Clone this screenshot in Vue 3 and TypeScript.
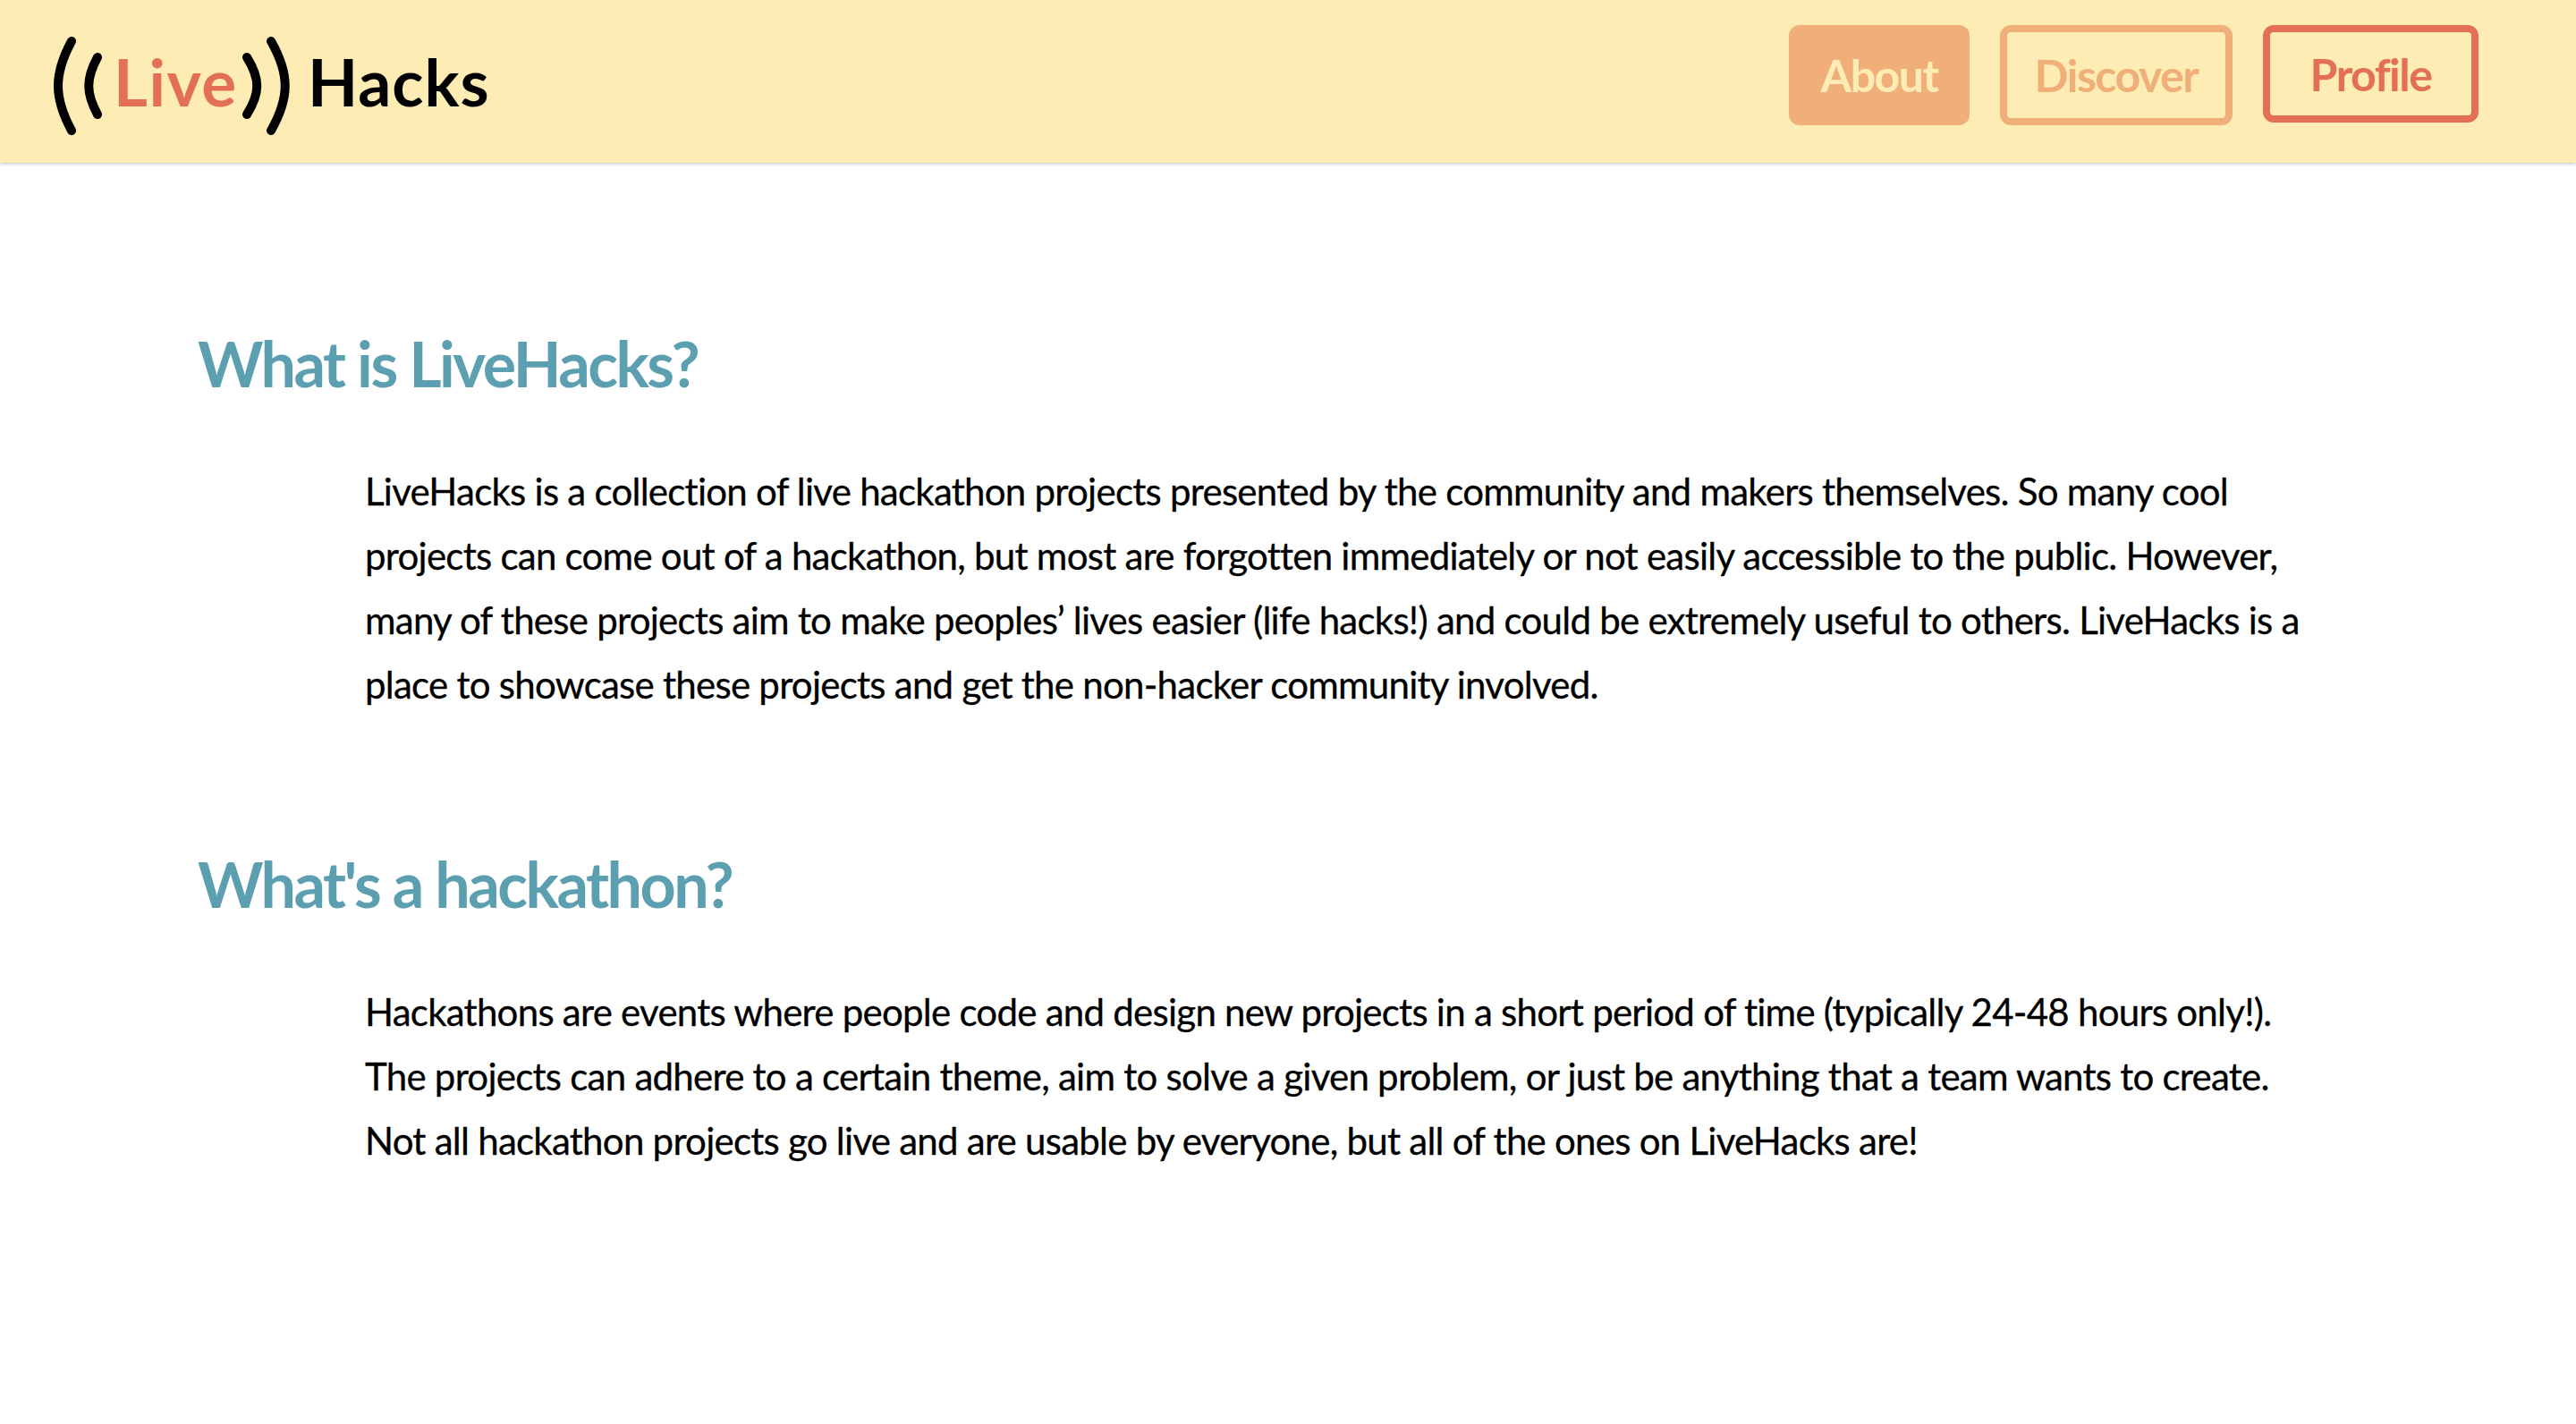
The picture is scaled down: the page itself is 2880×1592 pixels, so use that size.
<template>
  <div class="page">
    <header class="header">
      <a class="logo" href="#">
        <svg class="waves" width="56" height="110" viewBox="0 0 56 110">
          <path d="M22 5C2 42 2 68 22 105M51 23C38 47 38 63 51 87" />
        </svg>
        <span class="logo-live">Live</span>
        <svg class="waves" width="54" height="110" viewBox="0 0 54 110">
          <path d="M32 5C53 42 53 68 32 105M5 23C20 47 20 63 5 87" />
        </svg>
        <span class="logo-hacks">Hacks</span>
      </a>
      <nav class="nav">
        <button class="btn btn-about">About</button>
        <button class="btn btn-discover">Discover</button>
        <button class="btn btn-profile">Profile</button>
      </nav>
    </header>

    <main class="content">
      <section v-for="item in sections" :key="item.title" class="block">
        <h2 class="title">{{ item.title }}</h2>
        <p class="text">
          <span v-for="line in item.lines" :key="line" class="line">{{ line }}</span>
        </p>
      </section>
    </main>
  </div>
</template>

<script setup lang="ts">
interface Section {
  title: string
  lines: string[]
}

const sections: Section[] = [
  {
    title: 'What is LiveHacks?',
    lines: [
      'LiveHacks is a collection of live hackathon projects presented by the community and makers themselves. So many cool',
      'projects can come out of a hackathon, but most are forgotten immediately or not easily accessible to the public. However,',
      'many of these projects aim to make peoples’ lives easier (life hacks!) and could be extremely useful to others. LiveHacks is a',
      'place to showcase these projects and get the non-hacker community involved.'
    ]
  },
  {
    title: "What's a hackathon?",
    lines: [
      'Hackathons are events where people code and design new projects in a short period of time (typically 24-48 hours only!).',
      'The projects can adhere to a certain theme, aim to solve a given problem, or just be anything that a team wants to create.',
      'Not all hackathon projects go live and are usable by everyone, but all of the ones on LiveHacks are!'
    ]
  }
]
</script>

<style>
html,
body {
  margin: 0;
  background: #fff;
}
</style>

<style scoped>
.page {
  min-height: 1592px;
  font-family: Lato, "Open Sans", sans-serif;
  color: #000;
}

.header {
  display: flex;
  justify-content: space-between;
  align-items: flex-start;
  height: 182px;
  padding: 0 109px 0 58px;
  box-sizing: border-box;
  background: #fdecb4;
  box-shadow: 0 1px 4px rgba(0, 0, 0, 0.25);
}

.logo {
  display: flex;
  align-items: center;
  margin-top: 41px;
  height: 110px;
  text-decoration: none;
}

.waves path {
  fill: none;
  stroke: #000;
  stroke-width: 10;
  stroke-linecap: round;
}

.logo-live,
.logo-hacks {
  font-size: 73px;
  font-weight: 700;
  line-height: 100px;
  margin-bottom: 10px;
}

.logo-live {
  width: 144px;
  margin-left: 13px;
  letter-spacing: 1.5px;
  color: #e37056;
}

.logo-hacks {
  margin-left: 19px;
  letter-spacing: 1px;
  color: #000;
}

.nav {
  display: flex;
  align-items: flex-start;
  gap: 34px;
  padding-top: 28px;
}

.btn {
  height: 112px;
  box-sizing: border-box;
  border: 8px solid #f0ae78;
  border-radius: 12px;
  background: transparent;
  font-family: inherit;
  font-size: 50px;
  font-weight: 700;
  letter-spacing: -1.5px;
  padding: 0;
}

.btn-about {
  width: 202px;
  background: #f0ae78;
  color: #fdecb4;
}

.btn-discover {
  width: 260px;
  color: #f0ae78;
}

.btn-profile {
  width: 241px;
  height: 109px;
  border-color: #e37056;
  color: #e37056;
}

.content {
  padding: 176px 0 0 221px;
}

.block {
  margin-bottom: 139px;
}

.title {
  margin: 0;
  font-size: 70px;
  font-weight: 700;
  line-height: 96px;
  letter-spacing: -2.5px;
  color: #5b9fb0;
}

.text {
  margin: 59px 0 0 187px;
  font-size: 42px;
  line-height: 72px;
  letter-spacing: -0.74px;
  -webkit-text-stroke: 0.3px #000;
}

.line {
  display: block;
  white-space: nowrap;
}
</style>
